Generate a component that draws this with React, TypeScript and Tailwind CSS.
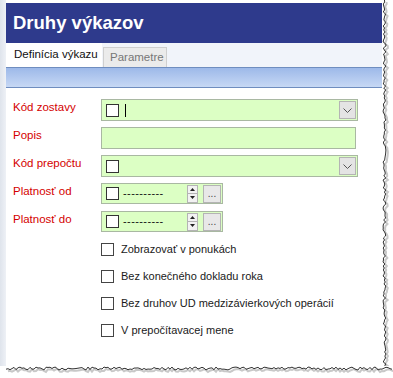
import React from 'react';

const labelRows = [
  { label: 'Kód zostavy', kind: 'combo', cursor: true },
  { label: 'Popis', kind: 'text' },
  { label: 'Kód prepočtu', kind: 'combo' },
  { label: 'Platnosť od', kind: 'date' },
  { label: 'Platnosť do', kind: 'date' },
] as const;

const options = [
  'Zobrazovať v ponukách',
  'Bez konečného dokladu roka',
  'Bez druhov UD medzizávierkových operácií',
  'V prepočítavacej mene',
];

function jag(len: number, seed: number) {
  const pts: number[] = [];
  let s = seed;
  for (let i = 0; i <= len; i += 2) {
    s = (s * 9301 + 49297) % 233280;
    pts.push(i, 1 + (s / 233280) * 3);
  }
  return pts;
}

function RightEdge() {
  const p = jag(368, 7);
  const line: string[] = [];
  const shadow: string[] = [];
  for (let i = 0; i < p.length; i += 2) {
    line.push(`${p[i + 1]},${p[i]}`);
    shadow.push(`${p[i + 1] + 2},${p[i] + 2}`);
  }
  return (
    <svg width="11" height="366" className="block shrink-0">
      <polyline points={shadow.join(' ')} fill="none" stroke="#c8c8c8" strokeWidth="2" />
      <polyline points={line.join(' ')} fill="none" stroke="#333" strokeWidth="1" />
    </svg>
  );
}

function BottomEdge() {
  const p = jag(386, 13);
  const line: string[] = [];
  const shadow: string[] = [];
  for (let i = 0; i < p.length; i += 2) {
    line.push(`${p[i] + 6},${p[i + 1]}`);
    shadow.push(`${p[i] + 8},${p[i + 1] + 2}`);
  }
  return (
    <svg width="393" height="12" className="block">
      <polyline points={shadow.join(' ')} fill="none" stroke="#c8c8c8" strokeWidth="2" />
      <polyline points={line.join(' ')} fill="none" stroke="#333" strokeWidth="1" />
    </svg>
  );
}

function Box({ className = '' }: { className?: string }) {
  return <span className={`block h-[13px] w-[13px] shrink-0 border border-[#333] bg-white ${className}`} />;
}

function DropButton() {
  return (
    <span className="flex h-[18px] w-[17px] items-center justify-center border border-[#b4b4b4] bg-[#e4e4e4]">
      <svg width="9" height="5" viewBox="0 0 9 5">
        <polyline points="0.5,0.5 4.5,4.5 8.5,0.5" fill="none" stroke="#555" strokeWidth="1" />
      </svg>
    </span>
  );
}

function Spinner() {
  return (
    <span className="flex h-[18px] w-[11px] flex-col border border-[#b4b4b4] bg-[#f2f2f2]">
      <span className="flex flex-1 items-center justify-center border-b border-[#b4b4b4]">
        <svg width="5" height="3" viewBox="0 0 5 3">
          <polygon points="0,3 2.5,0 5,3" fill="#222" />
        </svg>
      </span>
      <span className="flex flex-1 items-center justify-center">
        <svg width="5" height="3" viewBox="0 0 5 3">
          <polygon points="0,0 2.5,3 5,0" fill="#222" />
        </svg>
      </span>
    </span>
  );
}

export default function App() {
  return (
    <div className="flex h-[378px] w-[393px] flex-col overflow-hidden bg-white font-['Liberation_Sans',Arial,sans-serif]">
      <div className="flex">
        <div className="flex h-[366px] w-[382px]">
          <div className="w-[6px] shrink-0 bg-gradient-to-r from-[#dfe4ec] to-[#eef1f6]" />
          <div className="flex flex-1 flex-col bg-white pt-[3px]">
            <div className="flex h-[40px] items-center bg-[#2e3a8c] pl-[7px] text-[18.5px] font-bold text-white">
              Druhy výkazov
            </div>
            <div className="flex h-[24px] items-end bg-[#f1f4fa]">
              <div className="flex h-[24px] w-[96px] items-center bg-white pl-[8px] text-[11.5px] text-[#111]">
                Definícia výkazu
              </div>
              <div className="ml-[1px] flex h-[20px] w-[64px] items-center border border-b-0 border-[#cfcfcf] bg-[#ebebeb] pl-[6px] text-[11.5px] text-[#777]">
                Parametre
              </div>
            </div>
            <div className="h-[21px] border-y border-[#6f8dbf] bg-gradient-to-b from-[#9db9e9] to-[#c7d8f4]" />

            <div className="flex flex-col gap-[6px] pt-[11px]">
              {labelRows.map((r) => (
                <div key={r.label} className="flex h-[22px] items-start">
                  <div className="w-[95px] shrink-0 pl-[7px] pt-[1px] text-[11.5px] leading-[14px] text-[#d40000]">
                    {r.label}
                  </div>
                  {r.kind === 'date' ? (
                    <div className="flex h-[21px] w-[122px] items-center border border-[#a9b8a2] bg-[#dcffc4] pl-[4px]">
                      <Box />
                      <span className="ml-[4px] text-[11px] leading-none tracking-[0.4px] text-[#111]">----------</span>
                      <span className="ml-auto" />
                      <Spinner />
                      <span className="ml-[5px] mr-[1px] flex h-[18px] w-[18px] items-center justify-center border border-[#b4b4b4] bg-[#e8e8e8] text-[10px] leading-none text-[#444]">
                        ...
                      </span>
                    </div>
                  ) : (
                    <div
                      className={`flex h-[22px] items-center border border-[#a9b8a2] bg-[#dcffc4] pl-[4px] ${
                        r.kind === 'text' ? 'w-[255px]' : 'w-[257px]'
                      }`}
                    >
                      {r.kind === 'combo' ? (
                        <>
                          <Box />
                          {'cursor' in r && r.cursor ? <span className="ml-[6px] h-[13px] w-[1px] bg-black" /> : null}
                          <span className="ml-auto mr-[1px]">
                            <DropButton />
                          </span>
                        </>
                      ) : null}
                    </div>
                  )}
                </div>
              ))}
            </div>

            <div className="mt-[10px] flex flex-col gap-[14px] pl-[95px]">
              {options.map((o) => (
                <div key={o} className="flex h-[13px] items-center gap-[7px]">
                  <Box className="!border-[#444]" />
                  <span className="text-[11px] leading-none text-[#1a1a1a]">{o}</span>
                </div>
              ))}
            </div>
          </div>
        </div>
        <RightEdge />
      </div>
      <BottomEdge />
    </div>
  );
}
